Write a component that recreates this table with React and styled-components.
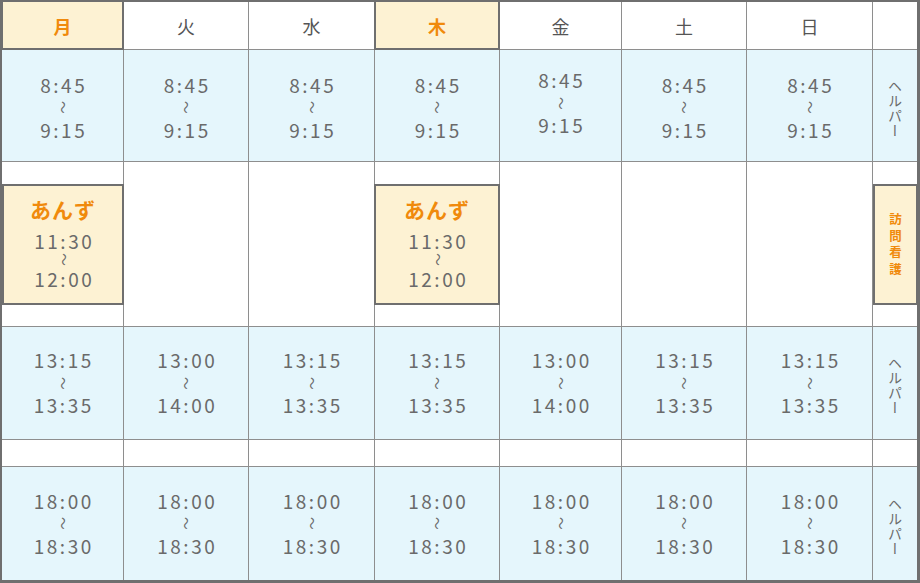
import React from "react";
import styled, { createGlobalStyle, css } from "styled-components";

const Global = createGlobalStyle`
  html, body { margin: 0; padding: 0; background: #fff; }
  body { font-family: "Noto Sans CJK JP", "Noto Sans", sans-serif; }
`;

const LINE = "#8e8e8e";
const DARK = "#6f6f6f";
const BLUE = "#e5f6fc";
const CREAM = "#fdf2d3";
const ORANGE = "#f08a0c";
const TEXT = "#6a6a6a";

const Table = styled.div`
  box-sizing: border-box;
  width: 920px;
  height: 583px;
  border-style: solid;
  border-color: ${DARK};
  border-width: 2px 3px 3px 2px;
  display: grid;
  grid-template-columns: 122px 125px 126px 125px 122px 125px 126px 1fr;
  grid-template-rows: 48px 112px 165px 113px 27px 1fr;
`;

const Cell = styled.div`
  box-sizing: border-box;
  position: relative;
  display: flex;
  align-items: center;
  justify-content: center;
  border-right: ${(p) => (p.$last ? "none" : `1px solid ${LINE}`)};
  border-bottom: ${(p) => (p.$bottom ? "none" : `1px solid ${LINE}`)};
  background: ${(p) => (p.$blue ? BLUE : "#fff")};
  min-width: 0;
`;

const HeadCell = styled(Cell)`
  font-size: 18px;
  color: #555;
  ${(p) =>
    p.$hl &&
    css`
      background: ${CREAM};
      color: ${ORANGE};
      font-weight: 700;
      border-right-color: ${DARK};
      border-bottom-color: ${DARK};
      box-shadow: inset 1px 0 0 ${DARK}, inset -1px 0 0 ${DARK},
        inset 0 -1px 0 ${DARK}, -1px 0 0 ${DARK};
    `}
`;

const Time = styled.div`
  display: flex;
  flex-direction: column;
  align-items: center;
  color: ${TEXT};
  font-size: 19px;
  letter-spacing: 2.5px;
  padding-left: 2.5px;
  line-height: ${(p) => p.$lh || 22.5}px;
  margin-top: ${(p) => p.$offset || 0}px;
`;

const Wave = styled.span`
  display: inline-block;
  font-size: 14px;
  transform: rotate(90deg) scaleX(0.9);
  letter-spacing: 0;
`;

const Vertical = styled.div`
  writing-mode: vertical-rl;
  font-size: 14px;
  color: ${TEXT};
  letter-spacing: 1px;
  margin-top: 6px;
`;

const SlotCell = styled(Cell)`
  align-items: stretch;
  padding: 22px 0 21px;
`;

const Box = styled.div`
  flex: 1;
  box-sizing: border-box;
  margin-right: -1px;
  margin-left: ${(p) => (p.$edge ? "0" : "-1px")};
  border: 2px solid ${DARK};
  background: ${CREAM};
  display: flex;
  flex-direction: column;
  align-items: center;
  justify-content: center;
  padding-bottom: ${(p) => p.$pb || 0}px;
  position: relative;
`;

const Name = styled.div`
  color: ${ORANGE};
  font-weight: 700;
  font-size: 21px;
  letter-spacing: 1px;
  line-height: 26px;
  margin-bottom: 9px;
`;

const VerticalBold = styled.div`
  writing-mode: vertical-rl;
  color: ${ORANGE};
  font-weight: 700;
  font-size: 12.5px;
  letter-spacing: 4px;
  margin-top: 2px;
`;

const days = ["月", "火", "水", "木", "金", "土", "日"];
const hl = [true, false, false, true, false, false, false];

const TimeBlock = ({ from, to, lh, offset }) => (
  <Time $lh={lh} $offset={offset}>
    <span>{from}</span>
    <Wave>〜</Wave>
    <span>{to}</span>
  </Time>
);

const row3 = ["13:15", "13:00", "13:15", "13:15", "13:00", "13:15", "13:15"];
const row3to = ["13:35", "14:00", "13:35", "13:35", "14:00", "13:35", "13:35"];

export default function App() {
  return (
    <>
      <Global />
      <Table>
        {days.map((d, i) => (
          <HeadCell key={d} $hl={hl[i]}>
            {d}
          </HeadCell>
        ))}
        <HeadCell $last />

        {days.map((d, i) => (
          <Cell key={"r1" + d} $blue>
            <TimeBlock from="8:45" to="9:15" offset={i === 4 ? -5 : 4} />
          </Cell>
        ))}
        <Cell $blue $last>
          <Vertical>ヘルパー</Vertical>
        </Cell>

        {days.map((d, i) =>
          hl[i] ? (
            <SlotCell key={"m" + d}>
              <Box $edge={i === 0} $pb={6}>
                <Name>あんず</Name>
                <TimeBlock from="11:30" to="12:00" lh={19} />
              </Box>
            </SlotCell>
          ) : (
            <Cell key={"m" + d} />
          )
        )}
        <SlotCell $last>
          <Box $edge>
            <VerticalBold>訪問看護</VerticalBold>
          </Box>
        </SlotCell>

        {days.map((d, i) => (
          <Cell key={"r3" + d} $blue>
            <TimeBlock from={row3[i]} to={row3to[i]} />
          </Cell>
        ))}
        <Cell $blue $last>
          <Vertical>ヘルパー</Vertical>
        </Cell>

        {days.map((d) => (
          <Cell key={"g" + d} />
        ))}
        <Cell $last />

        {days.map((d) => (
          <Cell key={"r4" + d} $blue $bottom>
            <TimeBlock from="18:00" to="18:30" />
          </Cell>
        ))}
        <Cell $blue $last $bottom>
          <Vertical>ヘルパー</Vertical>
        </Cell>
      </Table>
    </>
  );
}
